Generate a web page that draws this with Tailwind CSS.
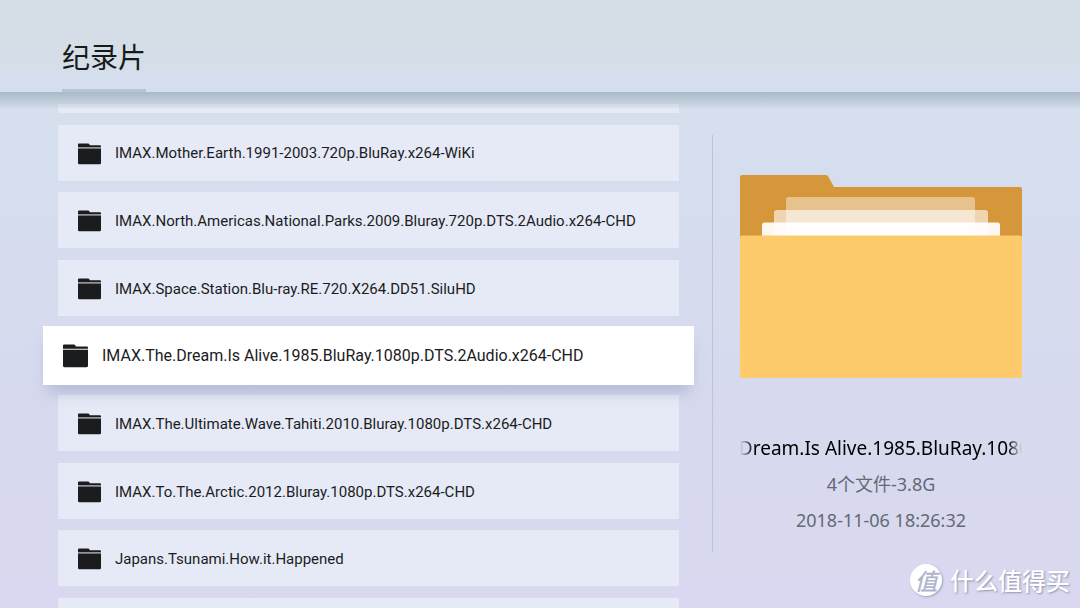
<!DOCTYPE html>
<html lang="zh-CN">
<head>
<meta charset="utf-8">
<meta name="viewport" content="width=device-width, initial-scale=1">
<title>纪录片</title>
<script src="https://cdn.jsdelivr.net/npm/@tailwindcss/browser@4"></script>
</head>
<body class="relative flex h-screen flex-col overflow-hidden bg-linear-to-b from-[#d5dfee] from-20% via-[#d6dbee] via-50% to-[#d9d8f0] font-['Roboto','Noto_Sans_CJK_SC',sans-serif] text-[#1b1c1e]">

<svg class="hidden" aria-hidden="true">
  <symbol id="folder" viewBox="0.5 0 23 22">
    <path d="M1.500 0.500H10.500Q11.500 0.500 12 1.500L12.300 2.300H22.500Q23.500 2.300 23.500 3.500V4.300H0.500V1.500Q0.500 0.500 1.500 0.500Z"/>
    <path d="M0.500 4.300H23.500V5.500H0.500Z" fill-opacity="0.300"/>
    <path d="M0.500 5.500H23.500V20Q23.500 21.300 22.300 21.300H1.700Q0.500 21.300 0.500 20Z"/>
  </symbol>
</svg>

<header class="relative z-10 flex h-[92px] shrink-0 items-end bg-linear-to-b from-[#d5dee6] from-60% to-[#d5deef] to-90% pl-[62px]">
  <h1 class="border-b-3 border-[#b9c3d1] pb-3 font-['Noto_Sans_CJK_SC',sans-serif] text-[28px] leading-[42px] text-[#151a1b]">纪录片</h1>
  <div class="absolute inset-x-0 top-full h-4 bg-linear-to-b from-[#a9b9c7] to-[#c6d3e0]/30"></div>
</header>

<main class="flex min-h-0 flex-1 pt-3">
  <section class="min-w-0 flex-1 overflow-hidden pr-[33px] pl-[58px]" aria-label="文件列表">
    <ul class="-mt-[47px] flex h-[597px] flex-col justify-between text-[15px]">
      <li class="h-14 bg-[#e6eaf6]"></li>
      <li class="h-14 bg-[#e6eaf6]"><button class="flex size-full items-center gap-[14px] pt-0.5 pl-5 text-left"><svg class="h-[22px] w-[23px] fill-current"><use href="#folder"/></svg>IMAX.Mother.Earth.1991-2003.720p.BluRay.x264-WiKi</button></li>
      <li class="h-14 bg-[#e6eaf6]"><button class="flex size-full items-center gap-[14px] pt-0.5 pl-5 text-left"><svg class="h-[22px] w-[23px] fill-current"><use href="#folder"/></svg>IMAX.North.Americas.National.Parks.2009.Bluray.720p.DTS.2Audio.x264-CHD</button></li>
      <li class="h-14 bg-[#e6eaf6]"><button class="flex size-full items-center gap-[14px] pt-0.5 pl-5 text-left"><svg class="h-[22px] w-[23px] fill-current"><use href="#folder"/></svg>IMAX.Space.Station.Blu-ray.RE.720.X264.DD51.SiluHD</button></li>
      <li class="z-10 -mx-[15px] -mt-[2px] -mb-px h-[59px] bg-white shadow-[0_12px_14px_-4px_rgba(130,140,180,0.400)]"><button aria-current="true" class="flex size-full items-center gap-[14px] pt-0.5 pl-5 text-left text-base"><svg class="h-6 w-[25px] fill-current"><use href="#folder"/></svg>IMAX.The.Dream.Is Alive.1985.BluRay.1080p.DTS.2Audio.x264-CHD</button></li>
      <li class="h-14 bg-[#e6eaf6]"><button class="flex size-full items-center gap-[14px] pt-0.5 pl-5 text-left"><svg class="h-[22px] w-[23px] fill-current"><use href="#folder"/></svg>IMAX.The.Ultimate.Wave.Tahiti.2010.Bluray.1080p.DTS.x264-CHD</button></li>
      <li class="h-14 bg-[#e6eaf6]"><button class="flex size-full items-center gap-[14px] pt-0.5 pl-5 text-left"><svg class="h-[22px] w-[23px] fill-current"><use href="#folder"/></svg>IMAX.To.The.Arctic.2012.Bluray.1080p.DTS.x264-CHD</button></li>
      <li class="h-14 bg-[#e6eaf6]"><button class="flex size-full items-center gap-[14px] pt-0.5 pl-5 text-left"><svg class="h-[22px] w-[23px] fill-current"><use href="#folder"/></svg>Japans.Tsunami.How.it.Happened</button></li>
      <li class="h-14 bg-[#e6eaf6]"></li>
    </ul>
  </section>

  <aside class="mt-[31px] mr-[58px] mb-14 flex w-[310px] shrink-0 flex-col items-center border-l border-[#bdc4d4] pt-10 pl-[27px] font-['Noto_Sans','Noto_Sans_CJK_SC',sans-serif]">
    <svg class="w-full" viewBox="0 0 282 203" aria-hidden="true">
      <path d="M2 0H86Q87.500 0 88.500 2L94 12H280Q282 12 282 14V70H0V2Q0 0 2 0Z" fill="#d6973b"/>
      <path d="M46 62V25Q46 22 49 22H232Q235 22 235 25V62Z" fill="#fff" fill-opacity="0.420"/>
      <path d="M34 62V38Q34 35 37 35H245Q248 35 248 38V62Z" fill="#fff" fill-opacity="0.600"/>
      <path d="M22 62V50Q22 47.500 24.500 47.500H257.500Q260 47.500 260 50V62Z" fill="#fff" fill-opacity="0.930"/>
      <path d="M2 60.500H280Q282 60.500 282 62.500V201Q282 203 280 203H2Q0 203 0 201V62.500Q0 60.500 2 60.500Z" fill="#fecb6c"/>
    </svg>
    <h2 class="mt-14 w-full overflow-hidden mask-r-from-95% mask-l-from-95% indent-[-90px] text-[19px] leading-7 whitespace-nowrap text-black">IMAX.The.Dream.Is Alive.1985.BluRay.1080p.DTS.2Audio.x264-CHD</h2>
    <p class="mt-1 text-lg leading-9 text-[#666972]">4个文件-3.8G</p>
    <p class="text-lg leading-9 text-[#666972]">2018-11-06 18:26:32</p>
  </aside>
</main>

<div class="absolute right-[10px] bottom-[10px] z-20 flex items-center gap-2 font-['Noto_Sans_CJK_SC',sans-serif] leading-9 text-white">
  <span class="flex size-8 items-center justify-center rounded-full bg-white text-[23px] font-medium text-[#b0b5cc] italic shadow-[1px_1px_2px_rgba(120,125,160,0.600)]">值</span>
  <span class="text-2xl leading-9 font-medium text-shadow-[1px_1px_2px_rgba(110,115,150,0.700)]">什么值得买</span>
</div>
</body>
</html>
